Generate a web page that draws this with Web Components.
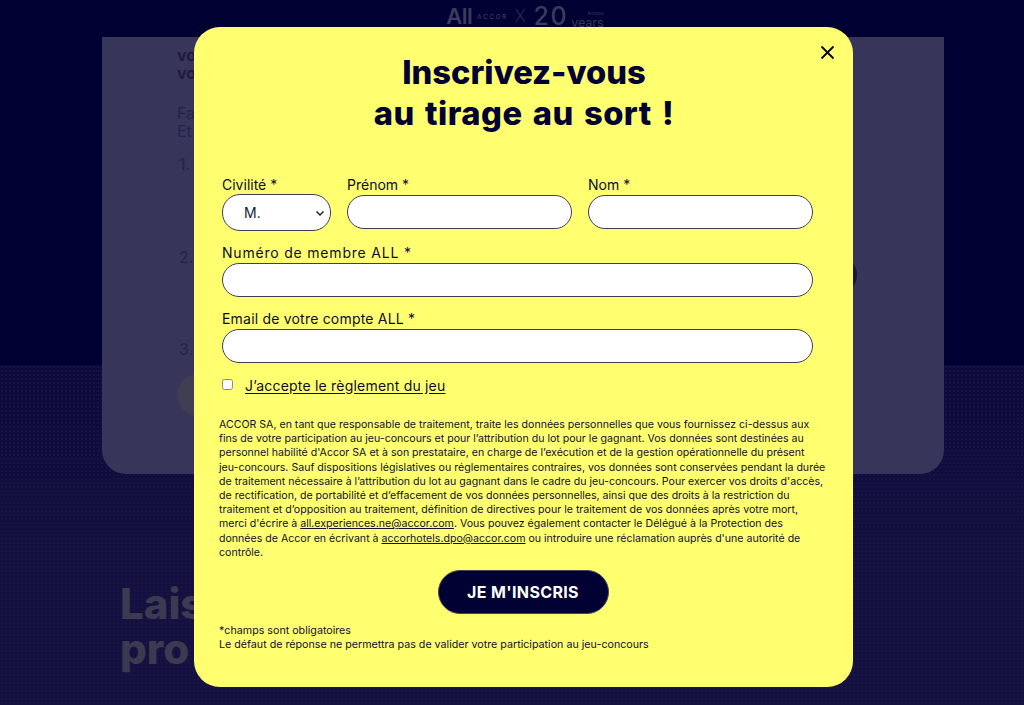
<!DOCTYPE html>
<html lang="fr"><head><meta charset="utf-8"><title>Inscription</title>
<style>
html,body{margin:0;height:705px;overflow:hidden;background:#000033}
body{font-family:"Inter","Liberation Sans",sans-serif}
</style></head><body>
<page-backdrop>
  <brand-logo slot="logo"></brand-logo>
  <span slot="t1">vo<br>vo</span>
  <span slot="t2">Fa<br>Et</span>
  <span slot="big">Lais<br>pro</span>
</page-backdrop>
<signup-modal>
  <span slot="title">Inscrivez-vous<br><span style="word-spacing:2.5px;letter-spacing:.5px">au tirage au sort !</span></span>
  <form-row>
    <form-field label="Civilité *" w="109"><pill-select value="M."></pill-select></form-field>
    <form-field label="Prénom *" w="225"><pill-input></pill-input></form-field>
    <form-field label="Nom *" w="225"><pill-input></pill-input></form-field>
  </form-row>
  <form-field label="Numéro de membre ALL *" w="591" ls=".8"><pill-input></pill-input></form-field>
  <form-field label="Email de votre compte ALL *" w="591" ls=".2"><pill-input></pill-input></form-field>
  <accept-check>J’accepte le règlement du jeu</accept-check>
  <legal-text>ACCOR SA, en tant que responsable de traitement, traite les données personnelles que vous fournissez ci-dessus aux<br>fins de votre participation au jeu-concours et pour l’attribution du lot pour le gagnant. Vos données sont destinées au<br>personnel habilité d'Accor SA et à son prestataire, en charge de l’exécution et de la gestion opérationnelle du présent<br>jeu-concours. Sauf dispositions législatives ou réglementaires contraires, vos données sont conservées pendant la durée<br>de traitement nécessaire à l’attribution du lot au gagnant dans le cadre du jeu-concours. Pour exercer vos droits d'accès,<br>de rectification, de portabilité et d’effacement de vos données personnelles, ainsi que des droits à la restriction du<br>traitement et d’opposition au traitement, définition de directives pour le traitement de vos données après votre mort,<br>merci d'écrire à <u>all.experiences.ne@accor.com</u>. Vous pouvez également contacter le Délégué à la Protection des<br>données de Accor en écrivant à <u>accorhotels.dpo@accor.com</u> ou introduire une réclamation auprès d'une autorité de<br>contrôle.</legal-text>
  <submit-button>JE M'INSCRIS</submit-button>
  <legal-text class="foot">*champs sont obligatoires<br>Le défaut de réponse ne permettra pas de valider votre participation au jeu-concours</legal-text>
</signup-modal>
<script>
const def=(name,html)=>customElements.define(name,class extends HTMLElement{
  connectedCallback(){ if(this.shadowRoot)return; const r=this.attachShadow({mode:'open'}); r.innerHTML=html; }
});
def('brand-logo',`<style>
:host{display:flex;align-items:center;gap:5px;height:26px;margin-top:3px;color:#3c3b5e;font-family:"Inter",sans-serif}
.all{font-size:22px;font-weight:600;letter-spacing:-.6px}
.acc{font-size:6.5px;letter-spacing:1.5px;font-weight:500;margin-top:2px}
.x{font-size:17px;font-weight:200;margin:0 3px 0 2px}
.n{font-size:25px;font-weight:500;letter-spacing:1.5px}
.y{display:flex;flex-direction:column;align-items:flex-end;font-size:12.5px;line-height:11px;padding-top:7px;margin-left:-2px}
.y small{font-size:4.5px;line-height:6px}
</style><span class="all">All</span><span class="acc">ACCOR</span><span class="x">X</span><span class="n">20</span><span class="y"><small>Années</small>years</span>`);
def('page-backdrop',`<style>
:host{display:block;position:relative;width:1024px;height:705px;overflow:hidden;font-family:"Inter","Liberation Sans",sans-serif;
 background:linear-gradient(#000033 0 365px,#0d0a3c 365px,#15113f 620px)}
.dots{position:absolute;left:0;right:0;top:365px;bottom:0;background:radial-gradient(circle,#191549 .6px,transparent 1px) 0 0/4px 4px}
.top{display:flex;justify-content:center;height:37px;margin-left:26px}
.card{position:relative;margin:0 80px 0 102px;height:437px;box-sizing:border-box;background:#37355a;border-radius:0 0 24px 24px;padding:9px 0 0 75px;color:#1c1a40;font-size:16px;line-height:18px;display:flex;flex-direction:column}
.t1{font-weight:700;height:58px}
.t2{height:51px;color:#25234a}
ol{list-style:none;margin:0;padding:0 0 0 2px;display:flex;flex-direction:column}
li{height:92.5px;color:#25234a}
li:nth-child(3){height:20px}
.btn{width:60px;height:42px;border-radius:21px;background:#3f3e52;margin-top:14px}
.dark{position:absolute;left:800px;top:255px;width:57px;height:40px;border-radius:20px;background:#1a183f}
.big{position:relative;margin:107px 0 0 120px;font-size:42px;line-height:45px;font-weight:800;color:#3b3a50}
</style>
<div class="dots"></div>
<div class="top"><slot name="logo"></slot></div>
<div class="card">
 <div class="t1"><slot name="t1"></slot></div>
 <div class="t2"><slot name="t2"></slot></div>
 <ol><li>1.</li><li>2.</li><li>3.</li></ol>
 <div class="btn"></div>
</div>
<div class="dark"></div>
<div class="big"><slot name="big"></slot></div>`);
def('signup-modal',`<style>
:host{position:absolute;left:194px;top:27px;width:659px;height:660px;box-sizing:border-box;background:#ffff70;border-radius:26px;padding:25px 27px 0 28px;color:#000033;font-family:"Inter","Liberation Sans",sans-serif;display:flex;flex-direction:column}
h1{margin:0 0 42px;text-align:center;font-size:32.7px;line-height:41px;font-weight:800;color:#000033}
button{position:absolute;right:17px;top:17px;width:17px;height:17px;padding:0;border:0;background:none}
svg{display:block}
</style>
<button aria-label="Fermer"><svg width="17" height="17" viewBox="0 0 17 17"><path d="M2.5 2.5 14.5 14.5M14.5 2.5 2.5 14.5" stroke="#000022" stroke-width="1.8" fill="none"/></svg></button>
<h1><slot name="title"></slot></h1>
<slot></slot>`);
def('form-row',`<style>:host{display:flex;gap:16px;padding-top:1px}</style><slot></slot>`);
customElements.define('form-field',class extends HTMLElement{connectedCallback(){if(this.shadowRoot)return;const r=this.attachShadow({mode:'open'});r.innerHTML=`<style>
:host{display:block;width:${this.getAttribute('w')}px;margin-bottom:14px;flex:none}
label{display:block;font-size:14px;line-height:16px;padding-bottom:1px;letter-spacing:${this.getAttribute('ls')||0}px;color:#0d0d33;white-space:nowrap}
</style><label>${this.getAttribute('label')}</label><slot></slot>`;}});
def('pill-input',`<style>
:host{display:block;padding-top:1px}
input{display:block;box-sizing:border-box;width:100%;height:34px;border:1px solid #3d3d60;border-radius:17px;background:#fff;padding:0 20px;margin:0;outline:0}
</style><input type="text">`);
customElements.define('pill-select',class extends HTMLElement{connectedCallback(){if(this.shadowRoot)return;const r=this.attachShadow({mode:'open'});r.innerHTML=`<style>
:host{display:block}
.s{box-sizing:border-box;height:37px;border:1px solid #3d3d60;border-radius:18px;background:#fff;display:flex;align-items:center;justify-content:space-between;padding:0 5px 0 21px;font-size:14px;color:#1a1a33}
</style><div class="s"><span>${this.getAttribute('value')}</span><svg width="10" height="10" viewBox="0 0 10 10"><path d="M1.5 3.5 5 7l3.5-3.5" stroke="#222" stroke-width="1.5" fill="none"/></svg></div>`;}});
def('accept-check',`<style>
:host{display:flex;align-items:center;gap:12px;margin:-1px 0 24px;height:18px;font-size:14px;letter-spacing:.2px;color:#0d0d33}
i{display:block;width:9px;height:9px;border:1px solid #8a8a8a;border-radius:2.5px;background:#fff;margin-bottom:2px}
u{text-underline-offset:2px}
</style><i></i><u><slot></slot></u>`);
def('legal-text',`<style>
:host{display:block;margin-left:-3px;font-size:10.6px;line-height:14.2px;color:#111133;white-space:nowrap}
:host(.foot){line-height:14px;font-size:10.7px}
</style><slot></slot>`);
def('submit-button',`<style>
:host{display:block;text-align:center;margin:10px 0 10px;padding-right:2px}
button{width:171px;height:44px;border-radius:22px;background:#000033;border:1px solid #444460;color:#fff;font:700 16px "Inter","Liberation Sans",sans-serif;letter-spacing:.35px;padding:0}
</style><button><slot></slot></button>`);
</script>
</body></html>
